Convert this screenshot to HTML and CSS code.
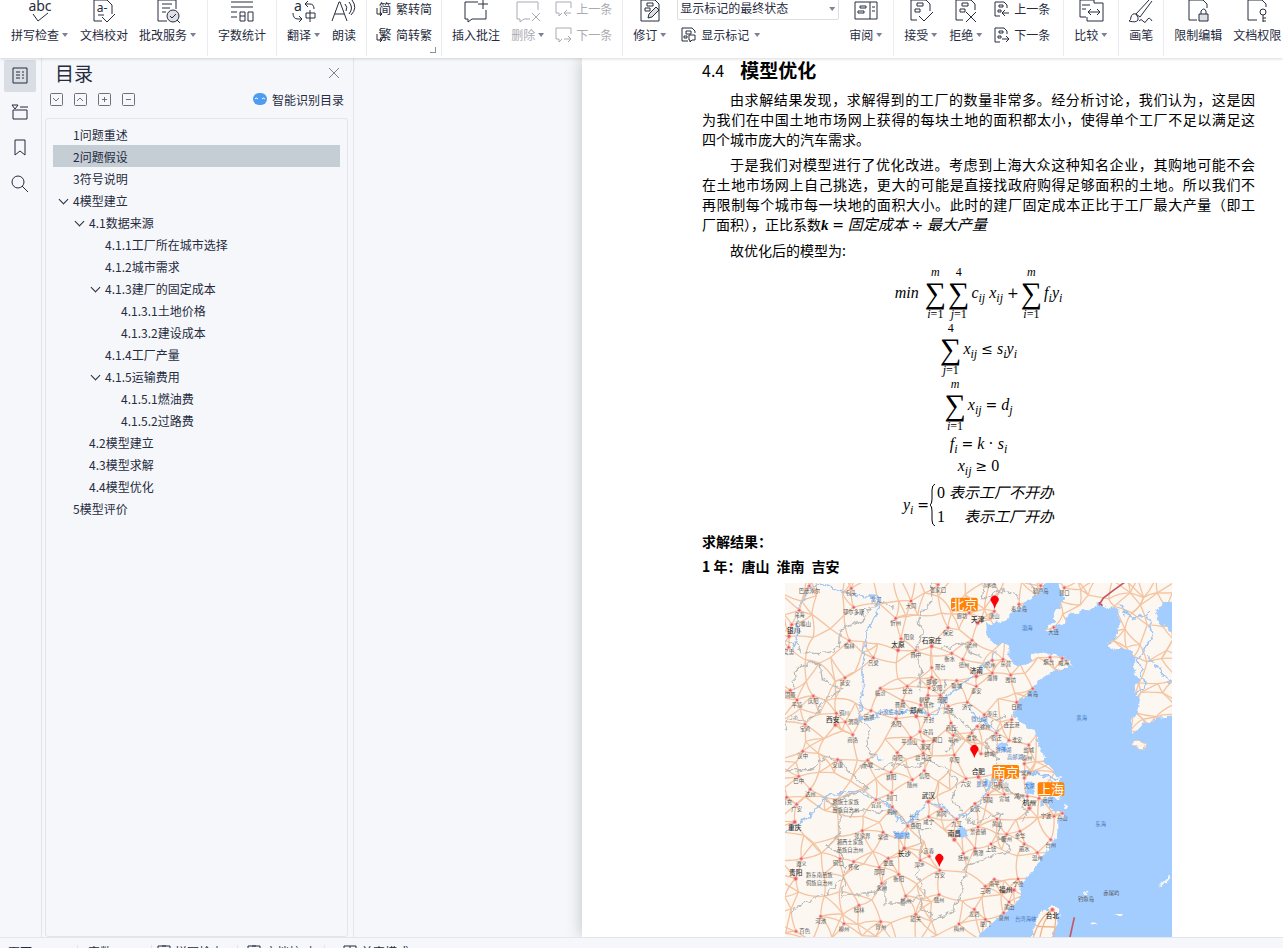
FILE: index.html
```
<!DOCTYPE html>
<html lang="zh-CN">
<head>
  <meta charset="UTF-8">
  <meta name="viewport" content="width=device-width, initial-scale=1.0">
  <title>模型优化</title>
  <link rel="stylesheet" href="styles.css">
</head>
<body>
<div class="app">

  <!-- 功能区 -->
  <header class="ribbon">
    <div class="group">
      <button class="tool">
        <svg class="icon" viewBox="0 0 24 24"><text x="12" y="11" class="abc">abc</text><path d="M5 14l5 7L20 13"/></svg>
        <span class="label">拼写检查<i class="arrow"></i></span>
      </button>
      <button class="tool">
        <svg class="icon" viewBox="0 0 24 24"><path d="M10 21H2V0H15L20 5V14M10 17l5 5 8-8M6 15h6"/><text x="10" y="12" class="small-a">a-</text></svg>
        <span class="label">文档校对</span>
      </button>
      <button class="tool">
        <svg class="icon" viewBox="0 0 24 24"><path d="M11 21H2V0H20V9M6 4h10M6 8h8M6 12h4"/><circle cx="17" cy="16" r="6" class="tint"/><path d="M14 16l2 2 4-4M21 20l3 3"/></svg>
        <span class="label">批改服务<i class="arrow"></i></span>
      </button>
    </div>
    <div class="group">
      <button class="tool">
        <svg class="icon" viewBox="0 0 24 24"><path d="M1 2H23M1 7H23M1 12H7M1 17H7M10 12h5v9h-5zM10 16h5M18 12h5v9h-5z"/></svg>
        <span class="label">字数统计</span>
      </button>
    </div>
    <div class="group">
      <button class="tool">
        <svg class="icon" viewBox="0 0 24 24"><text x="6" y="11" class="abc">a</text><path d="M16 1l-3 3 3 3M13 4h5q4 0 4 5M1 13q0 6 5 6h4M7 16l3 3-3 3M14 13h9v5h-9zM18 10v12"/></svg>
        <span class="label">翻译<i class="arrow"></i></span>
      </button>
      <button class="tool">
        <svg class="icon" viewBox="0 0 24 24"><path d="M0 21L7 2h1l7 19M3 14h9M13 4q3 3 1 7M17 2q5 6 0 12M20 0q6 8-1 15"/></svg>
        <span class="label">朗读</span>
      </button>
    </div>
    <div class="group corner">
      <div class="stack">
        <button class="row-tool"><svg class="icon-s" viewBox="0 0 15 16"><text x="9" y="12" class="glyph">简</text><path d="M1 7v6h5M4 11l2 2-2 2"/></svg>繁转简</button>
        <button class="row-tool"><svg class="icon-s" viewBox="0 0 15 16"><text x="9" y="12" class="glyph">繁</text><path d="M1 7v6h5M4 11l2 2-2 2"/></svg>简转繁</button>
      </div>
    </div>
    <div class="group">
      <button class="tool">
        <svg class="icon" viewBox="0 0 24 24"><path d="M14 2H1V19H4V22L8 19H22V10M19 0V9M14 4H24"/></svg>
        <span class="label">插入批注</span>
      </button>
      <button class="tool off" disabled>
        <svg class="icon" viewBox="0 0 24 24"><path d="M14 19H8L4 22V19H1V2H22V10M16 13l8 8M24 13l-8 8"/></svg>
        <span class="label">删除<i class="arrow"></i></span>
      </button>
      <div class="stack">
        <button class="row-tool off" disabled><svg class="icon-s" viewBox="0 0 15 16"><path d="M6 12L3 15V12H0V1H15V7M15 12H8M11 9l-3 3 3 3"/></svg>上一条</button>
        <button class="row-tool off" disabled><svg class="icon-s" viewBox="0 0 15 16"><path d="M6 12L3 15V12H0V1H15V7M8 12H15M12 9l3 3-3 3"/></svg>下一条</button>
      </div>
    </div>
    <div class="group track">
      <button class="tool">
        <svg class="icon" viewBox="0 0 24 24"><path d="M3 0H17L21 4V21H3zM9 3h6v3H9zM7 8h5v3H7z"/><path class="tint" d="M10 18l1-4 7-7 3 3-7 7z"/></svg>
        <span class="label">修订<i class="arrow"></i></span>
      </button>
      <div class="stack select-stack">
        <select class="state" aria-label="显示状态"><option>显示标记的最终状态</option></select>
        <button class="row-tool"><svg class="icon-s" viewBox="0 0 15 16"><path d="M7 14H1V1H11L14 4V6M5 4h5v3H5zM3 9h3v2H3zM8 8h6v5h-3l-2 2v-2H8z"/></svg>显示标记<i class="arrow"></i></button>
      </div>
      <button class="tool">
        <svg class="icon" viewBox="0 0 24 24"><path d="M1 2H23V19H1zM16 2V19M6 6h6v2H6zM4 11h6v2H4zM18 7h3M18 11h3"/></svg>
        <span class="label">审阅<i class="arrow"></i></span>
      </button>
    </div>
    <div class="group accept">
      <button class="tool">
        <svg class="icon" viewBox="0 0 24 24"><path d="M8 20H2V0H17L21 4V11M8 3h6v3H8zM6 9h5v3H6zM10 16l5 5 9-9"/></svg>
        <span class="label">接受<i class="arrow"></i></span>
      </button>
      <button class="tool">
        <svg class="icon" viewBox="0 0 24 24"><path d="M9 20H2V0H17L21 4V10M8 3h6v3H8zM6 9h5v3H6zM12 12l10 10M22 12L12 22"/></svg>
        <span class="label">拒绝<i class="arrow"></i></span>
      </button>
      <div class="stack">
        <button class="row-tool"><svg class="icon-s" viewBox="0 0 15 16"><path d="M6 15H1V1H10L13 4V7M5 4h4v2H5zM4 9h3v2H4zM15 12H8M11 9l-3 3 3 3"/></svg>上一条</button>
        <button class="row-tool"><svg class="icon-s" viewBox="0 0 15 16"><path d="M6 15H1V1H10L13 4V7M5 4h4v2H5zM4 9h3v2H4zM8 12H15M12 9l3 3-3 3"/></svg>下一条</button>
      </div>
    </div>
    <div class="group">
      <button class="tool">
        <svg class="icon" viewBox="0 0 24 24"><path d="M7 17H1V0H15V3M3 5h8M3 9h4M15 3H24V21H8V17M9 12H21M12 9l-3 3 3 3M18 9l3 3-3 3"/></svg>
        <span class="label">比较<i class="arrow"></i></span>
      </button>
    </div>
    <div class="group">
      <button class="tool">
        <svg class="icon" viewBox="0 0 24 24"><path d="M7 14L20 0M11 17L23 1M7 14q-4-1-5 3 0 3-2 4 7 2 9-1 1-2-2-6l4 3M10 21q2-3 4 0t4-1 5 1"/></svg>
        <span class="label">画笔</span>
      </button>
    </div>
    <div class="group last">
      <button class="tool">
        <svg class="icon" viewBox="0 0 24 24"><path d="M11 20H3V0H17L21 4V8"/><path class="tint" d="M13 14h9v7h-9z"/><path d="M15 14v-3q3-4 5 0v3"/></svg>
        <span class="label">限制编辑</span>
      </button>
      <button class="tool">
        <svg class="icon" viewBox="0 0 24 24"><path d="M12 20H3V0H17L21 4V7M18 15v7M18 18h3M18 21h3"/><circle cx="18" cy="12" r="3"/></svg>
        <span class="label">文档权限</span>
      </button>
    </div>
  </header>

  <main class="work">
    <!-- 侧边栏 -->
    <aside class="rail">
      <button class="rail-btn active" aria-label="目录"><svg class="icon-r" viewBox="0 0 16 16"><path d="M1 0H15V15H1zM4 4h4M4 7h4M4 10h4M10 4h2M10 7h2M10 10h2"/></svg></button>
      <button class="rail-btn" aria-label="章节"><svg class="icon-r" viewBox="0 0 16 16"><path d="M0 1h6L3 5zM8 3h8M1 6v9h14V6z"/></svg></button>
      <button class="rail-btn" aria-label="书签"><svg class="icon-r" viewBox="0 0 16 16"><path d="M3 0H13V15L8 11 3 15z"/></svg></button>
      <button class="rail-btn" aria-label="查找"><svg class="icon-r" viewBox="0 0 16 16"><circle cx="6" cy="6" r="6"/><path d="M10 10l6 6"/></svg></button>
    </aside>

    <section class="panel">
      <div class="panel-head">
        <h2>目录</h2>
        <button class="close" aria-label="关闭"><svg viewBox="0 0 10 10"><path d="M0 0l10 10M10 0L0 10"/></svg></button>
      </div>
      <div class="panel-tools">
        <button aria-label="展开"><svg viewBox="0 0 13 13"><rect x="0.5" y="0.5" width="12" height="12" rx="1"/><path d="M3 5l3 3 3-3"/></svg></button>
        <button aria-label="收起"><svg viewBox="0 0 13 13"><rect x="0.5" y="0.5" width="12" height="12" rx="1"/><path d="M3 8l3-3 3 3"/></svg></button>
        <button aria-label="添加"><svg viewBox="0 0 13 13"><rect x="0.5" y="0.5" width="12" height="12" rx="1"/><path d="M4 6.500h5M6.500 4v5"/></svg></button>
        <button aria-label="减少"><svg viewBox="0 0 13 13"><rect x="0.5" y="0.5" width="12" height="12" rx="1"/><path d="M4 6.500h5"/></svg></button>
        <a class="smart" href="#"><svg viewBox="0 0 14 12"><rect width="14" height="12" rx="6" fill="#4e9bf2"/><path d="M2 6q1-2 3 0M9 6q1-2 3 0" fill="none" stroke="#fff"/></svg>智能识别目录</a>
      </div>
      <nav class="toc">
        <a href="#" class="l1"><i class="fold"></i>1问题重述</a>
        <a href="#" class="l1 current"><i class="fold"></i>2问题假设</a>
        <a href="#" class="l1"><i class="fold"></i>3符号说明</a>
        <a href="#" class="l1"><i class="fold open"></i>4模型建立</a>
        <a href="#" class="l2"><i class="fold open"></i>4.1数据来源</a>
        <a href="#" class="l3"><i class="fold"></i>4.1.1工厂所在城市选择</a>
        <a href="#" class="l3"><i class="fold"></i>4.1.2城市需求</a>
        <a href="#" class="l3"><i class="fold open"></i>4.1.3建厂的固定成本</a>
        <a href="#" class="l4"><i class="fold"></i>4.1.3.1土地价格</a>
        <a href="#" class="l4"><i class="fold"></i>4.1.3.2建设成本</a>
        <a href="#" class="l3"><i class="fold"></i>4.1.4工厂产量</a>
        <a href="#" class="l3"><i class="fold open"></i>4.1.5运输费用</a>
        <a href="#" class="l4"><i class="fold"></i>4.1.5.1燃油费</a>
        <a href="#" class="l4"><i class="fold"></i>4.1.5.2过路费</a>
        <a href="#" class="l2"><i class="fold"></i>4.2模型建立</a>
        <a href="#" class="l2"><i class="fold"></i>4.3模型求解</a>
        <a href="#" class="l2"><i class="fold"></i>4.4模型优化</a>
        <a href="#" class="l1"><i class="fold"></i>5模型评价</a>
      </nav>
    </section>

    <!-- 文档 -->
    <div class="canvas">
      <article class="page">
        <h1><span>4.4</span>模型优化</h1>
        <p>
          <span class="line first">由求解结果发现，求解得到的工厂的数量非常多。经分析讨论，我们认为，这是因</span>
          <span class="line">为我们在中国土地市场网上获得的每块土地的面积都太小，使得单个工厂不足以满足这</span>
          <span class="line end">四个城市庞大的汽车需求。</span>
        </p>
        <p>
          <span class="line first">于是我们对模型进行了优化改进。考虑到上海大众这种知名企业，其购地可能不会</span>
          <span class="line">在土地市场网上自己挑选，更大的可能是直接找政府购得足够面积的土地。所以我们不</span>
          <span class="line">再限制每个城市每一块地的面积大小。此时的建厂固定成本正比于工厂最大产量（即工</span>
          <span class="line end">厂面积），正比系数<b class="math"><i>k</i></b><span class="math"> <u>=</u> <em>固定成本</em> <u>÷</u> <em>最大产量</em></span></span>
        </p>
        <p><span class="line first end">故优化后的模型为:</span></p>

        <div class="eq tall">
          <i>min</i>
          <span class="sum lead"><i>m</i><b>∑</b><span><i>i</i>=1</span></span>
          <span class="sum"><span>4</span><b>∑</b><span><i>j</i>=1</span></span>
          <span><i>c<sub>ij</sub></i> <i>x<sub>ij</sub></i> <u>+</u></span>
          <span class="sum"><i>m</i><b>∑</b><span><i>i</i>=1</span></span>
          <span><i>f<sub>i</sub>y<sub>i</sub></i></span>
        </div>
        <div class="eq tall">
          <span class="sum"><span>4</span><b>∑</b><span><i>j</i>=1</span></span>
          <span><i>x<sub>ij</sub></i> <u>≤</u> <i>s<sub>i</sub>y<sub>i</sub></i></span>
        </div>
        <div class="eq tall">
          <span class="sum"><i>m</i><b>∑</b><span><i>i</i>=1</span></span>
          <span><i>x<sub>ij</sub></i> <u>=</u> <i>d<sub>j</sub></i></span>
        </div>
        <div class="eq"><span><i>f<sub>i</sub></i> <u>=</u> <i>k</i> · <i>s<sub>i</sub></i></span></div>
        <div class="eq"><span><i>x<sub>ij</sub></i> <u>≥</u> 0</span></div>
        <div class="eq cases">
          <span><i>y<sub>i</sub></i> <u>=</u></span>
          <svg class="brace" viewBox="0 0 6 44"><path d="M5 1Q2 2 2 7V16Q2 21 0 22Q2 23 2 28V37Q2 42 5 43"/></svg>
          <div>
            <div>0 <em>表示工厂不开办</em></div>
            <div class="spread">1 <em>表示工厂开办</em></div>
          </div>
        </div>

        <h3>求解结果：</h3>
        <h3>1 年：唐山&ensp;淮南&ensp;吉安</h3>

        <figure>
          <svg class="map" viewBox="0 0 1161 1062" role="img" aria-label="选址地图">
            <defs>
              <filter id="rough" x="-5%" y="-5%" width="110%" height="110%">
                <feTurbulence type="fractalNoise" baseFrequency="0.045" numOctaves="3" seed="4"/>
                <feDisplacementMap in="SourceGraphic" scale="26" xChannelSelector="R" yChannelSelector="G"/>
              </filter>
            </defs>
            <rect class="land" width="1161" height="1062"/>
            <g id="roads"></g>
            <g class="border" filter="url(#rough)">
              <path d="M-10 165L30 185 50 208 105 212 145 205 165 175 165 140 235 112 240 85 285 60 320 70M440 0V55L400 100 412 150 390 215 410 260 400 320M30 318L25 270 50 245 105 240 112 290 170 318 120 350 100 390 60 412 10 400 0 440M228 410L255 440 245 490 270 520 230 550"/>
              <path d="M0 560L80 560 130 520 170 540 210 580 245 620 190 640 140 660 110 640M140 660L170 690 165 750 130 790 170 820 180 880 130 930 60 960 10 990M190 700L230 680 330 690 400 740 440 740M405 745L410 820 395 880 420 930 405 980 440 1000M180 880L170 940 270 930 300 900 300 960 360 960 410 940"/>
              <path d="M230 550L290 560 330 540 390 555 430 530 490 560 520 600 500 650 530 680 560 720 650 690 640 760 680 800 620 820 540 850 530 920 500 990 440 1010M480 290L470 360 510 400 560 440 620 420 660 400M470 200L530 180 560 210 590 220M600 0L590 50 650 20 700 40M640 440L600 480 640 540 620 610 690 630 730 690 710 720M730 0L750 40M500 410L520 470 480 510"/>
            </g>
            <g class="river" filter="url(#rough)">
              <path d="M20 200L37 160 37 80 73 12 115 6 185 30 235 40 285 45 280 75 247 146 230 250 233 320 222 408 262 405 290 388 390 386 450 392 485 342 560 280 600 245 640 205"/>
              <path d="M-15 760L28 726 75 700 130 636 220 626 270 646 320 674 335 706 370 726 425 656 475 670 515 706 555 686 585 660 615 600 655 586 705 566 755 572 820 590"/>
              <path d="M545 370L580 410 640 440M1000 60L1040 110 1090 90 1100 160 1060 230 1080 300M950 70L990 160 960 200M1090 220L1120 260 1161 300M1080 300L1040 360"/>
            </g>
            <g class="sea" filter="url(#rough)">
              <path d="M780-15L775 20 740 45 715 66 690 82 660 115 630 116 605 122 604 156 625 180 668 190 674 222 690 248 720 248 742 234 740 218 770 204 800 216 856 228 856 252 820 264 795 268 765 292 744 316 725 336 695 362 684 398 705 416 735 432 755 460 772 510 776 540 800 556 822 586 822 606 785 590 835 628 825 644 795 640 770 660 790 674 826 684 840 698 820 716 820 746 808 766 795 790 775 816 760 842 745 860 730 880 705 906 708 930 700 955 680 975 655 995 625 1015 595 1045 570 1085H1190V395L1135 400 1105 416 1075 422 1055 445 1035 452 1040 416 1055 386 1065 350 1050 320 1065 290 1045 260 1055 230 1038 206 1015 196 985 200 970 180 995 155 1005 120 1000 86 970 70 945 64 905 80 865 90 835 116 800 142 780 142 790 126 812 120 800 106 820 76 840 50 830 30 825-15z"/>
              <path d="M1190 45L1135 62 1112 86 1125 120 1160 148 1190 150z"/>
              <path d="M720 600L740 595 752 610 742 632 722 624zM518 735L545 730 550 755 530 765 515 755zM325 750L350 742 375 750 360 765 330 762zM640 480L665 485 672 505 645 498zM590 590L612 595 605 608zM270 515L290 530 285 540z"/>
            </g>
            <g class="isle" filter="url(#rough)">
              <path d="M732 1075L750 1026 770 986 800 968 823 978 817 1016 800 1075z"/>
              <ellipse cx="1062" cy="484" rx="19" ry="9" class="jeju"/>
              <path d="M1120 915L1140 890 1155 875 1158 880 1135 905zM920 1018h14v6h-14zM995 990h12v6h-12zM895 928h12v5h-12zM835 665h12v12h-12z"/>
            </g>
            <path class="tw-road" d="M745 1062Q765 1000 802 980 820 985 805 1062M765 1062Q775 1010 802 980M755 1030L808 1032"/>
            <path class="red-line" d="M1020-3L985 22 955 45 942 66M942 58L952 68M868 1003L855 1062"/>
            <g id="cities"></g>
            <g class="badge">
              <rect x="498" y="44" width="80" height="41" rx="6"/><text x="538" y="79">北京</text>
              <rect x="622" y="546" width="80" height="41" rx="6"/><text x="662" y="581">南京</text>
              <rect x="758" y="598" width="80" height="41" rx="6"/><text x="798" y="633">上海</text>
            </g>
            <g class="pin">
              <path d="M629 77Q625 65 620 58A12 12 0 1 1 638 58Q633 65 629 77z"/>
              <path d="M568 525Q564 513 559 506A12 12 0 1 1 577 506Q572 513 568 525z"/>
              <path d="M463 852Q459 840 454 833A12 12 0 1 1 472 833Q467 840 463 852z"/>
            </g>
          </svg>
        </figure>
      </article>
    </div>
  </main>

  <footer class="status">
    <span class="cell c1">页面</span>
    <span class="cell c2">字数</span>
    <span class="cell c3"><svg viewBox="0 0 14 12"><path d="M7 3V12M7 1H1V12M7 1h6V12M5 1h4"/></svg>拼写检查</span>
    <span class="cell c4"><svg viewBox="0 0 14 12"><path d="M7 3V12M7 1H1V12M7 1h6V12M5 1h4"/></svg>文档校对</span>
    <span class="cell c5"><svg viewBox="0 0 14 12"><path d="M1 1h12v11H1zM7 1v11M1 6h12"/></svg>兼容模式</span>
  </footer>
</div>
<script src="map.js"></script>
</body>
</html>
```
FILE: styles.css
```
:root {
  --ink: #262b3e;
  --bg: #f5f7fa;
  --line: #e2e5ea;
  --ui: "Noto Sans CJK SC", sans-serif;
  --math: "Liberation Serif", "Noto Sans CJK SC", serif;
}

* {
  box-sizing: border-box;
}

body {
  margin: 0;
  font-family: var(--ui);
  font-size: 12px;
  color: var(--ink);
}

button {
  padding: 0;
  border: 0;
  background: none;
  font: inherit;
  color: inherit;
}

a {
  color: inherit;
  text-decoration: none;
}

.app {
  display: flex;
  flex-direction: column;
  height: 100vh;
  overflow: hidden;
  background: var(--bg);
}

/* 功能区 */
.ribbon {
  display: flex;
  flex: none;
  height: 58px;
  padding-left: 1px;
  overflow: hidden;
  background: #fff;
  box-shadow: 0 1px 3px rgba(0, 0, 0, 0.15);
  position: relative;
  z-index: 1;
}

.group {
  display: flex;
  flex: none;
  align-items: flex-start;
  gap: 11px;
  height: 56px;
  padding: 0 10px;
  border-right: 1px solid #ececee;
  position: relative;
}

.group.last {
  border-right: 0;
}

.track {
  gap: 10px;
}

.corner {
  padding: 0 9px;
}

.accept {
  padding-right: 13px;
}

.corner::after {
  content: "";
  position: absolute;
  right: 5px;
  bottom: 3px;
  width: 5px;
  height: 5px;
  border: solid #8b909c;
  border-width: 0 1px 1px 0;
}

.tool {
  display: flex;
  flex-direction: column;
  align-items: center;
  gap: 2px;
}

.label,
.row-tool {
  display: flex;
  align-items: center;
  line-height: 18px;
  white-space: nowrap;
}

.off {
  color: #a9abb2;
}

.arrow {
  width: 6px;
  height: 4px;
  margin: 0 1px 0 3px;
  background: #7b8296;
  clip-path: polygon(0 0, 100% 0, 50% 100%);
}

.stack {
  display: flex;
  flex-direction: column;
  align-items: flex-start;
  gap: 8px;
}

.row-tool {
  gap: 5px;
}

.select-stack {
  gap: 6px;
  margin-top: -5px;
  position: relative;
}

.select-stack .row-tool {
  padding-left: 4px;
}

.select-stack .arrow {
  margin-left: 0;
}

.select-stack::after {
  content: "";
  position: absolute;
  top: 12px;
  right: 4px;
  width: 6px;
  height: 4px;
  background: #7b8296;
  clip-path: polygon(0 0, 100% 0, 50% 100%);
}

.state {
  width: 162px;
  height: 25px;
  padding: 0 2px;
  border: 1px solid #dcdee2;
  border-radius: 2px;
  background: #fff;
  font: 12px var(--ui);
  color: var(--ink);
  appearance: none;
}

svg {
  display: block;
}

.icon,
.icon-s,
.icon-r {
  fill: none;
  stroke: currentColor;
  overflow: visible;
}

.icon {
  width: 24px;
  height: 24px;
}

.icon-s {
  width: 15px;
  height: 16px;
}

.icon-r {
  width: 16px;
  height: 16px;
}

.icon text,
.icon-s text {
  fill: currentColor;
  stroke: none;
  text-anchor: middle;
}

.abc {
  font: 14px "Noto Sans", sans-serif;
}

.small-a {
  font: 12px "Noto Sans", sans-serif;
}

.glyph {
  font: 13px var(--ui);
}

.icon .tint {
  fill: #dde1e6;
}

/* 左侧 */
.work {
  display: flex;
  flex: 1;
  min-height: 0;
}

.rail {
  display: flex;
  flex-direction: column;
  gap: 4px;
  width: 42px;
  padding: 2px 4px;
  border-right: 1px solid var(--line);
}

.rail-btn {
  display: flex;
  align-items: center;
  justify-content: center;
  width: 32px;
  height: 32px;
  border-radius: 2px;
}

.rail-btn.active {
  background: #d9dee5;
}

.panel {
  display: flex;
  flex-direction: column;
  width: 312px;
  padding: 0 5px 0 3px;
  border-right: 1px solid var(--line);
}

.panel-head {
  display: flex;
  align-items: center;
  justify-content: space-between;
  height: 29px;
  padding: 0 9px 0 10px;
}

.panel-head h2 {
  margin: 0;
  font-size: 19px;
  font-weight: 400;
  line-height: 28px;
}

.close svg {
  width: 10px;
  height: 10px;
  fill: none;
  stroke: #7d8290;
}

.panel-tools {
  display: flex;
  align-items: center;
  gap: 11px;
  height: 24px;
  padding: 0 4px 0 5px;
}

.panel-tools button svg {
  width: 13px;
  height: 13px;
  fill: none;
  stroke: #6d7179;
}

.smart {
  display: flex;
  align-items: center;
  gap: 5px;
  margin-left: auto;
}

.smart svg {
  width: 14px;
  height: 12px;
}

.toc {
  flex: 1;
  margin-top: 7px;
  padding: 4px 7px;
  border: 1px solid var(--line);
  border-radius: 3px;
}

.toc a {
  display: flex;
  align-items: center;
  gap: 5px;
  height: 22px;
  padding-left: 5px;
}

.toc .current {
  background: #c5cdd5;
}

.toc .l2 {
  padding-left: 21px;
}

.toc .l3 {
  padding-left: 37px;
}

.toc .l4 {
  padding-left: 53px;
}

.fold {
  display: flex;
  justify-content: center;
  width: 10px;
}

.fold.open::before {
  content: "";
  width: 6px;
  height: 6px;
  margin-bottom: 2px;
  border: solid var(--ink);
  border-width: 0 1px 1px 0;
  transform: rotate(45deg);
}

/* 文档 */
.canvas {
  flex: 1;
  min-width: 0;
  padding-left: 228px;
  overflow: hidden;
}

.page {
  height: 100%;
  padding: 0 28px 0 120px;
  background: #fff;
  color: #000;
  font-size: 14px;
  box-shadow: 0 0 16px rgba(0, 0, 0, 0.22);
}

.page h1 {
  display: flex;
  align-items: center;
  gap: 16px;
  margin: 0 0 7px;
  font-size: 19px;
  line-height: 24px;
}

.page h1 span {
  font-size: 16px;
  font-weight: 400;
}

.page p {
  margin: 0 0 5px;
  line-height: 20px;
}

.line {
  display: block;
  text-align-last: justify;
  white-space: nowrap;
}

.line.end {
  text-align-last: left;
}

.line.first {
  padding-left: 28px;
}

.math {
  font-family: var(--math);
  font-size: 15px;
}

.eq {
  display: flex;
  align-items: center;
  justify-content: center;
  gap: 2px;
  height: 22px;
  font-family: var(--math);
  font-size: 16px;
  line-height: 20px;
  white-space: nowrap;
}

.eq.tall {
  height: 56px;
}

.eq u,
.math u {
  font-family: "DejaVu Serif", serif;
  font-size: 14px;
  line-height: 1;
  text-decoration: none;
}

.eq sub {
  font-size: 12px;
  line-height: 1;
  vertical-align: -4px;
}

.sum {
  display: flex;
  flex-direction: column;
  align-items: center;
  font-size: 12px;
  line-height: 12px;
}

.sum.lead {
  margin-left: 4px;
}

.sum b {
  font-size: 30px;
  font-weight: 400;
  line-height: 30px;
}

.eq.cases {
  height: 52px;
  gap: 1px;
  padding-top: 3px;
  line-height: 24px;
}

.cases em {
  font-size: 15px;
}

.spread {
  display: flex;
  justify-content: space-between;
}

.brace {
  width: 6px;
  height: 44px;
  fill: none;
  stroke: #000;
}

.page h3 {
  margin: 0;
  font-size: 14px;
  line-height: 25px;
}

figure {
  display: flex;
  justify-content: center;
  margin: 4px 0 0;
}

/* 地图 */
.map {
  width: 387px;
  height: 354px;
}

.land,
.isle {
  fill: #fcf8f1;
}

.road {
  fill: none;
  stroke: #f4c4a2;
  stroke-width: 4;
}

.border {
  fill: none;
  stroke: #b9b9b7;
  stroke-width: 4;
}

.river {
  fill: none;
  stroke: #a1c5f2;
  stroke-width: 5;
}

.sea {
  fill: #a3ccff;
}

.jeju {
  stroke: #f4c6a4;
  stroke-width: 3;
}

.tw-road {
  fill: none;
  stroke: #f0b48a;
  stroke-width: 4;
}

.red-line {
  fill: none;
  stroke: #c9555f;
  stroke-width: 5;
}

.dot {
  fill: #ea5b63;
  stroke: #f8b9b4;
  stroke-width: 3;
}

.city,
.water {
  font-family: var(--ui);
  font-size: 16px;
  fill: #555;
  text-anchor: middle;
}

.city.big {
  font-size: 20px;
  font-weight: 500;
  fill: #333;
}

.water {
  fill: #3f77bd;
}

.badge rect {
  fill: #ff8205;
}

.badge text {
  font-family: var(--ui);
  font-size: 39px;
  fill: #fff;
  text-anchor: middle;
}

.pin {
  fill: #fb0007;
}

/* 状态栏 */
.status {
  display: flex;
  flex: none;
  height: 11px;
  padding-top: 7px;
  overflow: hidden;
  border-top: 1px solid var(--line);
}

.cell {
  display: flex;
  gap: 4px;
  border-right: 1px solid var(--line);
  line-height: 13px;
}

.cell svg {
  width: 14px;
  height: 12px;
  fill: none;
  stroke: currentColor;
}

.c1 {
  width: 78px;
  padding-left: 8px;
}

.c2 {
  width: 74px;
  padding-left: 10px;
}

.c3 {
  width: 86px;
  padding-left: 5px;
}

.c4 {
  width: 87px;
  padding-left: 9px;
}

.c5 {
  padding-left: 18px;
  border-right: 0;
}
```
FILE: map.js
```
// x, y, name, label dx, label dy (default: below the dot)
const cities = [
  [73, 9, "巴彦淖尔"], [199, 16, "包头"], [206, 73, "鄂尔多斯"], [43, 82, "乌海"], [20, 125, "石嘴山", 34, 5],
  [11, 193, "吴忠"], [193, 173, "榆林"], [332, 106, "忻州"], [378, 54, "大同"], [459, 5, "张家口"],
  [348, 167, "阳泉", 24, 2], [489, 134, "保定"], [561, 172, "沧州"], [553, 90, "廊坊", -22, 16], [392, 202, "晋中"],
  [265, 224, "吕梁"], [500, 211, "衡水", -6, 22], [533, 229, "德州", 4, 24], [440, 254, "邢台", 26, 5], [440, 283, "邯郸", 0, 20],
  [515, 293, "聊城"], [432, 315, "安阳", 24, 6], [367, 310, "长治"], [286, 316, "临汾"], [180, 284, "延安"],
  [429, 337, "鹤壁", -10, 20], [466, 337, "濮阳", 6, 20], [574, 310, "泰安"], [16, 322, "固原"], [36, 351, "平凉"],
  [85, 339, "庆阳"], [258, 383, "运城", -6, 26], [353, 353, "晋城", -8, 20], [407, 366, "焦作", 24, 6], [431, 396, "开封"],
  [333, 407, "洛阳"], [490, 370, "菏泽"], [547, 358, "济宁"], [154, 391, "铜川", 24, 6], [181, 417, "渭南", 24, 6],
  [60, 424, "宝鸡"], [203, 455, "商洛"], [498, 420, "商丘"], [505, 457, "亳州"], [377, 464, "平顶山", -4, 20],
  [405, 446, "许昌", 24, 6], [415, 475, "漯河", 6, 24], [447, 472, "周口", 10, 4], [415, 511, "驻马店"], [337, 509, "南阳"],
  [53, 505, "汉中"], [158, 530, "安康"], [508, 516, "阜阳"], [560, 450, "淮北"],
  [628, 85, "唐山"], [702, 64, "秦皇岛"], [767, 8, "葫芦岛"], [838, 14, "营口"], [806, 133, "大连"],
  [618, -10, "承德"], [654, 229, "东营", 8, 20], [622, 232, "滨州", -6, 20], [622, 270, "淄博"], [677, 276, "潍坊"],
  [795, 223, "烟台", -4, 20], [832, 226, "威海", 4, 20], [743, 317, "青岛"], [695, 358, "日照"], [598, 395, "枣庄", 24, 4],
  [577, 430, "徐州", 24, 8], [680, 410, "连云港"], [634, 450, "宿迁"], [672, 472, "淮安", 24, 4], [731, 486, "盐城"],
  [588, 512, "蚌埠", 26, 6], [41, 580, "巴中"], [76, 619, "达州"], [5, 643, "南充"], [35, 664, "广安"],
  [248, 532, "十堰"], [318, 568, "襄阳"], [382, 590, "随州"], [418, 563, "信阳"], [320, 629, "荆门"],
  [273, 650, "宜昌"], [322, 672, "荆州"], [469, 679, "黄冈"], [431, 701, "咸宁"], [368, 729, "岳阳", 24, 6],
  [294, 748, "常德"], [232, 743, "张家界"], [515, 709, "九江"], [206, 836, "怀化"], [165, 827, "铜仁", -6, 20],
  [49, 827, "遵义"], [310, 826, "娄底"], [283, 853, "邵阳"], [341, 874, "衡阳"], [290, 901, "永州"],
  [362, 939, "郴州"], [406, 832, "萍乡", -2, 20], [433, 820, "宜春", -2, -10], [464, 862, "吉安"], [535, 811, "抚州"],
  [462, 935, "赣州"], [392, 994, "韶关"], [222, 967, "桂林"], [107, 1000, "河池"], [177, 1022, "柳州"],
  [287, 1016, "贺州"], [522, 1023, "梅州"], [568, 979, "龙岩"], [570, 662, "安庆"], [543, 587, "六安"],
  [33, 1045, "百色", 26, 6], [647, 592, "马鞍山", 0, 20], [718, 542, "泰州", 8, -10], [718, 585, "常州", 6, -8],
  [609, 636, "铜陵"], [658, 634, "宣城"], [636, 708, "黄山"], [727, 640, "湖州", -24, 4], [762, 646, "嘉兴", 26, 12],
  [807, 700, "宁波", -24, 6], [832, 691, "舟山"], [579, 732, "景德镇"], [665, 754, "衢州"], [705, 745, "金华"],
  [618, 783, "上饶"], [570, 796, "鹰潭", 10, 20], [718, 783, "丽水"], [797, 770, "台州"], [757, 809, "温州"],
  [628, 889, "南平"], [601, 910, "三明"], [699, 888, "宁德"], [672, 957, "莆田"], [656, 990, "泉州"],
  [601, 1009, "厦门"],
];

const capitals = [
  [12, 160, "银川", 14, -10], [339, 202, "太原", 0, -11], [440, 190, "石家庄", 0, -11], [574, 280, "济南", 0, -11],
  [394, 400, "郑州", 0, -10], [151, 426, "西安", -8, -10], [578, 120, "天津", 0, -4], [29, 717, "重庆", 0, 24],
  [430, 656, "武汉", 0, -10], [358, 796, "长沙", 0, 24], [508, 770, "南昌", 0, -10], [32, 887, "贵阳", 0, -10],
  [580, 582, "合肥", 0, -10], [733, 676, "杭州", 0, -10], [687, 921, "福州", -25, 7], [802, 980, "台北", 0, 24],
];

const waters = [
  [727, 141, "渤海"], [890, 412, "黄海"], [947, 728, "东海"], [722, 1014, "台湾海峡"], [350, 766, "洞庭湖"],
  [733, 616, "太湖"], [655, 507, "洪泽湖"], [690, 529, "高邮湖"], [583, 415, "微山湖"], [388, 708, "长江"],
  [273, 56, "黄河"], [318, 392, "小浪底水库"], [590, 608, "巢湖"],
];

const notes = [
  [182, 664, "恩施土家族"], [182, 688, "苗族自治州"], [195, 784, "湘西土家族"], [195, 808, "苗族自治州"],
  [103, 882, "黔东南苗族"], [103, 906, "侗族自治州"], [903, 954, "钓鱼岛"], [979, 935, "赤尾屿"],
];

const NS = "http://www.w3.org/2000/svg";

function add(parent, tag, attrs, text) {
  const el = document.createElementNS(NS, tag);
  for (const k in attrs) el.setAttribute(k, attrs[k]);
  if (text) el.textContent = text;
  parent.appendChild(el);
}

let seed = 11;
function rand() {
  seed = (seed * 16807) % 2147483647;
  return seed / 2147483647;
}

// junctions without a name, on a loose grid
const nodes = cities.concat(capitals).filter(c => c[2] !== "台北").map(c => [c[0], c[1]]);
function fill(x0, x1, y0, y1, step) {
  for (let x = x0; x < x1; x += step) {
    for (let y = y0; y < y1; y += step) {
      const p = [x + (rand() - 0.5) * step * 0.8, y + (rand() - 0.5) * step * 0.8];
      if (nodes.every(n => Math.hypot(n[0] - p[0], n[1] - p[1]) > step * 0.45)) nodes.push(p);
    }
  }
}
fill(-20, 860, -20, 1100, 60);
fill(870, 1200, -20, 460, 52);

const roads = document.getElementById("roads");
const drawn = new Set();
nodes.forEach((a, i) => {
  nodes
    .map((b, j) => ({ b, j, d: Math.hypot(a[0] - b[0], a[1] - b[1]) }))
    .filter(n => n.j !== i && n.d < 110)
    .sort((m, n) => m.d - n.d)
    .slice(0, 4)
    .forEach(({ b, j, d }) => {
      const key = Math.min(i, j) + "-" + Math.max(i, j);
      if (drawn.has(key)) return;
      drawn.add(key);
      const mx = (a[0] + b[0]) / 2 + (rand() - 0.5) * d * 0.3;
      const my = (a[1] + b[1]) / 2 + (rand() - 0.5) * d * 0.3;
      add(roads, "path", { class: "road", d: `M${a[0]} ${a[1]}Q${mx} ${my} ${b[0]} ${b[1]}` });
    });
});

const layer = document.getElementById("cities");
waters.forEach(([x, y, name]) => add(layer, "text", { class: "water", x, y }, name));
notes.forEach(([x, y, name]) => add(layer, "text", { class: "city", x, y }, name));
cities.forEach(([x, y, name, dx = 0, dy = 21]) => {
  add(layer, "circle", { class: "dot", cx: x, cy: y, r: 5 });
  add(layer, "text", { class: "city", x: x + dx, y: y + dy }, name);
});
capitals.forEach(([x, y, name, dx, dy]) => {
  add(layer, "circle", { class: "dot", cx: x, cy: y, r: 6 });
  add(layer, "text", { class: "city big", x: x + dx, y: y + dy }, name);
});
```
